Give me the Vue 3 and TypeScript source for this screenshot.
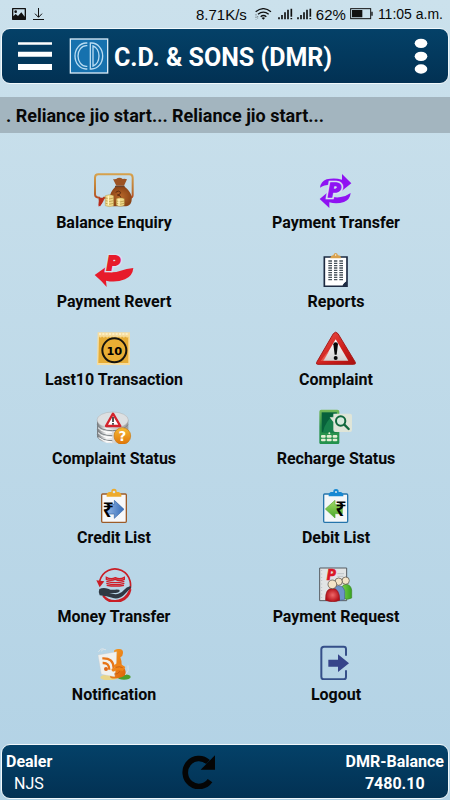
<script setup lang="ts">
import { ref } from 'vue'

interface MenuEntry {
  id: string
  label: string
  box: string
}

const entries = ref<MenuEntry[]>([
  { id: 'balance', label: 'Balance Enquiry', box: '192 33 120 111' },
  { id: 'transfer', label: 'Payment Transfer', box: '198 33 120 111' },
  { id: 'revert', label: 'Payment Revert', box: '192 269 120 111' },
  { id: 'reports', label: 'Reports', box: '198 269 120 111' },
  { id: 'last10', label: 'Last10 Transaction', box: '192 25 120 111' },
  { id: 'complaint', label: 'Complaint', box: '198 25 120 111' },
  { id: 'status', label: 'Complaint Status', box: '192 261 120 111' },
  { id: 'recharge', label: 'Recharge Status', box: '198 261 120 111' },
  { id: 'credit', label: 'Credit List', box: '192 18 120 111' },
  { id: 'debit', label: 'Debit List', box: '198 18 120 111' },
  { id: 'money', label: 'Money Transfer', box: '192 254 120 111' },
  { id: 'request', label: 'Payment Request', box: '198 254 120 111' },
  { id: 'notification', label: 'Notification', box: '192 25 120 111' },
  { id: 'logout', label: 'Logout', box: '198 25 120 111' },
])

const reportRows = [302, 309, 316, 323, 330, 337, 344, 351, 358]
</script>

<template>
  <div class="screen">
    <div class="status-bar">
      <svg class="picture" viewBox="36 24 42 36" aria-hidden="true">
        <path fill="#111" fill-rule="evenodd" d="M38 24h38q2 0 2 2v32q0 2-2 2H38q-2 0-2-2V26q0-2 2-2zm2 4v21l7-7 7 6 10-11 10 13V28z" />
        <circle cx="47" cy="35" r="4" fill="#111" />
      </svg>
      <svg class="download" viewBox="99 24 33 36" aria-hidden="true">
        <path fill="none" stroke="#111" stroke-width="3" d="M115.500 24v27M105 41l10.500 11L126 41M99 58.500h33" />
      </svg>
      <span class="speed">8.71K/s</span>
      <svg class="wifi" viewBox="90 24 51 36" aria-hidden="true">
        <g fill="none" stroke="#111" stroke-width="4">
          <path d="M92 35q23-18 46 0M99 43q16-13 32 0M107 50q8-7 17 0" />
        </g>
        <path fill="#111" d="M110 54q5-4 10 0l-5 5z" />
        <path stroke="#111" stroke-width="2" stroke-dasharray="2 3" d="M93 42v16M98 48v10" />
      </svg>
      <svg class="signal" viewBox="158 24 45 36" aria-hidden="true">
        <path stroke="#111" stroke-width="5" d="M161 52v6M170 45v13M179 37v21M188 29v29M198 26v24M198 54v4" />
      </svg>
      <svg class="signal" viewBox="158 24 45 36" aria-hidden="true">
        <path stroke="#111" stroke-width="5" d="M161 52v6M170 45v13M179 37v21M188 29v29M198 26v24M198 54v4" />
      </svg>
      <span class="speed">62%</span>
      <svg class="battery" viewBox="375 24 69 36" aria-hidden="true">
        <rect x="377" y="26" width="60" height="30" fill="none" stroke="#111" stroke-width="3" />
        <path fill="#111" d="M381 30h31v22h-31zM439 35h4v12h-4z" />
      </svg>
      <span class="clock">11:05 a.m.</span>
    </div>

    <header class="panel top">
      <button type="button" class="bare menu" aria-label="Menu">
        <svg viewBox="54 117 102 102">
          <path fill="#fff" d="M54 127h102v7H54zM54 155h102v15H54zM54 192h102v18H54z" />
        </svg>
      </button>
      <svg class="logo" viewBox="207 114 120 108" aria-hidden="true">
        <rect x="211" y="117" width="112" height="102" fill="#1671ae" stroke="#d9ebf6" stroke-width="4" />
        <g fill="none" stroke="#b9dcf2" stroke-width="4">
          <path d="M262 129h-4a33 39 0 0 0 0 78h4M262 137h-3a25 31 0 0 0 0 62h3" />
          <path d="M271 129h4a33 39 0 0 1 0 78h-4zM279 138a24 31 0 0 1 0 60z" />
        </g>
      </svg>
      <h1>C.D. &amp; SONS (DMR)</h1>
      <button type="button" class="bare more" aria-label="More options">
        <svg viewBox="568 114 42 108">
          <g fill="#fff">
            <ellipse cx="589" cy="130" rx="19" ry="14" />
            <ellipse cx="589" cy="169" rx="19" ry="14" />
            <ellipse cx="589" cy="207" rx="19" ry="14" />
          </g>
        </svg>
      </button>
    </header>

    <p class="ticker">. Reliance jio start... Reliance jio start...</p>

    <main class="grid">
      <button v-for="entry in entries" :key="entry.id" type="button" class="bare entry">
        <svg class="icon" :viewBox="entry.box" aria-hidden="true">
          <template v-if="entry.id === 'balance'">
            <defs>
              <linearGradient id="bubble" x2="0" y2="1"><stop stop-color="#d6a14c" /><stop offset=".55" stop-color="#b9702f" /><stop offset="1" stop-color="#b51f18" /></linearGradient>
              <radialGradient id="sack"><stop stop-color="#b8682a" /><stop offset="1" stop-color="#8b4417" /></radialGradient>
            </defs>
            <path fill="none" stroke="url(#bubble)" stroke-width="6" d="M205 43h93q10 0 10 10v52q0 8-8 8h-78q-5 12-14 24 3-14 0-24-13 0-13-10V53q0-10 10-10z" />
            <path fill="#b92a1c" d="M208 113h14q-5 16-16 28 4-14 2-28z" />
            <path fill="#9c5324" d="M249 57q8 2 14-3 9-2 15 3 7-2 13 1l-9 19h-23z" />
            <path fill="url(#sack)" d="M256 80h28c15 12 23 25 21 39-1 14-9 20-21 20h-30c-15 0-18-12-16-25 2-12 7-23 18-34z" />
            <path fill="none" stroke="#5c2b10" stroke-width="3" d="M255 79h29M257 97q8-8 15 0-1 8-10 8 10 0 11 9" />
            <g fill="#efd98b" stroke="#9c7c2d" stroke-width="1">
              <path d="M226 107q12-6 25 0v30q-12 6-25 0zM259 116q11-5 24 0v20q-11 6-24 0z" />
            </g>
            <path fill="none" stroke="#ac8b3a" stroke-width="2" d="M227 114q12 5 24 0M227 122q12 5 24 0M227 130q12 5 24 0M260 123q11 5 23 0M260 130q11 5 23 0" />
            <path stroke="#fff5c1" stroke-width="4" d="M235 107v29M267 117v20" />
          </template>

          <template v-else-if="entry.id === 'transfer'">
            <g fill="#8f12f2">
              <path d="M210 83q3-20 20-25 24-5 46 1V42l28 28-28 22V79q-20-8-34-5-21 0-32 9z" />
              <path d="M302 99q-2 20-20 27-22 7-44 1v17l-29-27 29-24v14q19 8 34 4 18-3 30-12z" />
            </g>
            <text x="235" y="110" class="letter halo">P</text>
            <text x="235" y="110" class="letter purple-letter">P</text>
          </template>

          <template v-else-if="entry.id === 'revert'">
            <path fill="#e71b2b" d="M194 344l35-25-4 14q24 7 47-2 17-6 38-8-2 24-25 34-28 11-57 4l2 19q-17-20-36-36z" />
            <text x="232" y="328" class="letter halo">P</text>
            <text x="232" y="328" class="letter red-letter">P</text>
          </template>

          <template v-else-if="entry.id === 'reports'">
            <path fill="#fff" stroke="#1d2b42" stroke-width="5" d="M223 290h68v88h-68z" />
            <path fill="#1d2b42" d="M276 379q4-14 15-16v16z" />
            <path fill="#fff" d="M276 375q2-11 12-14l-1 3q-7 4-9 11z" />
            <path fill="#d9a14c" d="M241 294q1-9 9-9 2-7 7-7t7 7q9 0 9 9z" />
            <circle cx="257" cy="284" r="2" fill="#fff" />
            <path
              v-for="y in reportRows"
              :key="y"
              stroke="#48535b"
              stroke-width="4"
              :d="`M235 ${y}h11M252 ${y}h10M268 ${y}h11`"
            />
          </template>

          <template v-else-if="entry.id === 'last10'">
            <path fill="#f6dda0" d="M203 38h97v98h-99l2-98z" />
            <path fill="#e5ac36" d="M207 51h88v79h-90z" />
            <path fill="none" stroke="#fff4ce" stroke-width="5" stroke-dasharray="6 4" d="M207 43h88" />
            <path fill="none" stroke="#f7dc95" stroke-width="5" stroke-dasharray="5 5" d="M209 51h86" />
            <circle cx="253" cy="92" r="36" fill="#e9ae34" stroke="#15130e" stroke-width="6" />
            <text x="253" y="105" class="ten" text-anchor="middle">10</text>
          </template>

          <template v-else-if="entry.id === 'complaint'">
            <defs>
              <linearGradient id="warn" x2="1" y2="1"><stop stop-color="#ef574e" /><stop offset=".6" stop-color="#cd1d1a" /><stop offset="1" stop-color="#a9100f" /></linearGradient>
              <linearGradient id="warnInner" x2="0" y2="1"><stop stop-color="#fff" /><stop offset="1" stop-color="#d2d2d2" /></linearGradient>
            </defs>
            <path fill="url(#warn)" stroke="#a51b1a" stroke-width="3" stroke-linejoin="round" d="M250 42q7-9 14 0l52 86q2 6-5 6H204q-7 0-4-6z" />
            <path fill="url(#warnInner)" d="M257 59l38 64h-76z" />
            <path fill="#ef6355" opacity=".75" d="M212 124q17-25 25-29l-16 28z" />
            <path fill="#080808" d="M250 74q0-6 7-6t7 6l-4 31h-6z" />
            <circle cx="257" cy="115" r="6" fill="#080808" />
          </template>

          <template v-else-if="entry.id === 'status'">
            <defs>
              <linearGradient id="disk"><stop stop-color="#73777b" /><stop offset=".3" stop-color="#f7f7f7" /><stop offset="1" stop-color="#999" /></linearGradient>
              <linearGradient id="help" x2="0" y2="1"><stop stop-color="#f6bb35" /><stop offset="1" stop-color="#e07408" /></linearGradient>
            </defs>
            <path fill="url(#disk)" d="M201 300h94v50q-12 20-47 20t-47-19z" />
            <path fill="none" stroke="#7d8387" stroke-width="3" d="M202 314q10 18 45 18t47-18M202 329q10 18 45 18M202 344q10 18 45 18" />
            <path fill="none" stroke="#fff" stroke-width="3" d="M204 323q14 15 42 15M204 338q14 15 42 15M206 353q14 12 40 13" />
            <ellipse cx="248" cy="300" rx="47" ry="24" fill="#dde0e2" stroke="#999" stroke-width="1" />
            <path fill="#fff" stroke="#d3232b" stroke-width="7" stroke-linejoin="round" d="M249 281l22 37h-43z" />
            <path stroke="#333" stroke-width="5" d="M249 291v15M249 309v5" />
            <circle cx="277" cy="348" r="25" fill="url(#help)" stroke="#c87911" stroke-width="2" />
            <text x="277" y="363" class="question" text-anchor="middle">?</text>
          </template>

          <template v-else-if="entry.id === 'recharge'">
            <defs>
              <linearGradient id="phone" x2="0" y2="1"><stop stop-color="#75b957" /><stop offset=".5" stop-color="#2c924d" /><stop offset="1" stop-color="#23924c" /></linearGradient>
            </defs>
            <rect x="208" y="269" width="60" height="104" rx="6" fill="url(#phone)" />
            <path fill="#07613b" d="M215 277h45v60h-45z" />
            <path fill="#17804b" d="M219 337q4-31 38-58l2-2h1v60z" />
            <g fill="#e4eed4">
              <rect x="213" y="345" width="14" height="8" rx="3" /><rect x="230" y="345" width="15" height="8" rx="3" /><rect x="248" y="345" width="14" height="8" rx="3" />
              <rect x="213" y="356" width="14" height="8" rx="3" /><rect x="230" y="356" width="15" height="8" rx="3" /><rect x="248" y="356" width="14" height="8" rx="3" />
              <circle cx="238" cy="340" r="3" />
            </g>
            <path fill="#dfe5d8" d="M250 281h50q6 0 6 6v43q0 6-6 6h-44q-6 0-6-6v-24l-11-14h11z" />
            <circle cx="272" cy="303" r="14" fill="#d7eadd" stroke="#10673c" stroke-width="6" />
            <path stroke="#10673c" stroke-width="7" stroke-linecap="round" d="M283 314l13 13" />
          </template>

          <template v-else-if="entry.id === 'credit'">
            <defs><linearGradient id="blueArrow" x2="1"><stop stop-color="#8fb4e3" /><stop offset="1" stop-color="#346bb8" /></linearGradient></defs>
            <rect x="215" y="42" width="74" height="85" rx="3" fill="#f7f8fa" stroke="#9c5b28" stroke-width="4" />
            <path fill="#edaa2c" d="M230 50q-2-12 8-14h6q-1-10 8-10t8 10h6q10 3 8 14z" />
            <circle cx="252" cy="36" r="4" fill="#d8e7ef" />
            <path fill="url(#blueArrow)" stroke="#3766a5" stroke-width="2" d="M232 73h21V61l29 27-29 27v-13h-21z" />
            <text x="235" y="110" class="rupee" text-anchor="middle">₹</text>
          </template>

          <template v-else-if="entry.id === 'debit'">
            <defs><linearGradient id="greenArrow" x2="0" y2="1"><stop stop-color="#a3da67" /><stop offset="1" stop-color="#49a928" /></linearGradient></defs>
            <rect x="221" y="42" width="72" height="85" rx="3" fill="#f5f7f8" stroke="#2574ab" stroke-width="4" />
            <path fill="#1788d2" d="M236 49q-1-11 7-13h7q-1-9 8-9t8 9h7q8 3 7 13z" />
            <circle cx="258" cy="36" r="3" fill="#d8e7ef" />
            <path fill="url(#greenArrow)" stroke="#5eaa3e" stroke-width="2" d="M226 87l29-26v13h22v27h-22v13z" />
            <text x="273" y="109" class="rupee" text-anchor="middle">₹</text>
          </template>

          <template v-else-if="entry.id === 'money'">
            <path fill="none" stroke="#c91e26" stroke-width="5" d="M209 302a47 48 0 1 1 10 43M219 347a47 48 0 0 0 83-20" />
            <path fill="#c91e26" d="M199 300l24 3-14 18z" />
            <g fill="none" stroke="#d11d27" stroke-width="4">
              <path d="M229 291q14 8 27 1 13 7 27-1v6q-14 7-27 0-14 6-27 0z" />
              <path d="M229 303q28 8 54 0M229 309q28 8 54 0M230 315q27 5 52 0" />
            </g>
            <path fill="#303943" d="M208 326q12-6 26-1 10 5 21 3 15-1 14 4-1 5-13 6h-18l18 4q15-1 25-12 9-10 19-12 7 1 0 7l-19 20q-11 11-29 9-24-7-43-9-5-10-1-19z" />
          </template>

          <template v-else-if="entry.id === 'request'">
            <defs>
              <radialGradient id="redBody"><stop stop-color="#ef6868" /><stop offset="1" stop-color="#b41019" /></radialGradient>
              <linearGradient id="greenBody" x2="1"><stop stop-color="#79d047" /><stop offset="1" stop-color="#36a31f" /></linearGradient>
            </defs>
            <path fill="#e1e4e5" stroke="#555b60" stroke-width="3" d="M209 263h81v98h-81z" />
            <path stroke="#8b969e" stroke-width="2" stroke-dasharray="2 8" d="M215 270v88" />
            <path stroke="#bdc4c8" stroke-width="3" d="M262 280h20M262 288h18" />
            <text x="231" y="298" class="small-letter">P</text>
            <path fill="url(#greenBody)" stroke="#42872e" stroke-width="2" d="M276 322q2-10 12-10 14 1 17 17v24q-12 6-23 2z" />
            <circle cx="287" cy="301" r="11" fill="#f4e4c7" stroke="#4b443b" stroke-width="2" />
            <path fill="#6e93c8" stroke="#426698" stroke-width="2" d="M251 330q3-14 15-14 15 1 18 17v24q-15 6-26 1z" />
            <circle cx="266" cy="304" r="11" fill="#f4e4c7" stroke="#4b443b" stroke-width="2" />
            <path fill="url(#redBody)" stroke="#92151b" stroke-width="2" d="M227 360q-2-36 20-36t22 36q-20 9-42 0z" />
            <circle cx="247" cy="312" r="13" fill="#f4e4c7" stroke="#4b443b" stroke-width="2" />
          </template>

          <template v-else-if="entry.id === 'notification'">
            <defs><linearGradient id="feed" x2="1" y2="1"><stop stop-color="#f6a327" /><stop offset="1" stop-color="#df6109" /></linearGradient></defs>
            <ellipse cx="237" cy="128" rx="26" ry="9" fill="#e9d68a" />
            <ellipse cx="282" cy="127" rx="20" ry="8" fill="#4c9e2b" />
            <path fill="none" stroke="#d9e3e8" stroke-width="3" d="M205 52q6-12 16-10M213 50q6-9 15-5M294 92q5 16-8 29" />
            <path fill="url(#feed)" d="M252 49q1-5 12-6 16-2 15 12 0 9-8 13 5 12 4 24 10 6 12 20 0 13-13 16-18 6-32 2l-6-14 18-22z" />
            <path fill="#f1f1ee" stroke="#c5c9c8" stroke-width="1" d="M204 61l56-10-1 33-5 42-40-7z" />
            <path fill="none" stroke="#e87517" stroke-width="7" d="M217 71q33-2 34 29M218 85q20-1 20 20" />
            <circle cx="228" cy="103" r="6" fill="#dd6719" />
            <path fill="#ee8419" d="M253 91q10-9 20-2l13 8-8 12-13-4-16 6q-8-5-2-10l9-2q-8-3-3-8z" />
            <path fill="none" stroke="#b84e0d" stroke-width="2" d="M257 98q13-4 21 1M252 118q10 3 18-8" />
          </template>

          <template v-else>
            <path fill="none" stroke="#354f89" stroke-width="6" d="M288 63V43q0-7-7-7h-59q-8 0-8 8v82q0 8 8 8h59q7 0 7-7v-20" />
            <path fill="#36448a" d="M235 75h29V59l33 27-33 26V96h-29z" />
          </template>
        </svg>
        <span>{{ entry.label }}</span>
      </button>
    </main>

    <footer class="panel bottom">
      <div class="account">
        <strong>Dealer</strong>
        <span class="name">NJS</span>
      </div>
      <button type="button" class="bare refresh" aria-label="Refresh">
        <svg viewBox="546 61 102 102">
          <path fill="none" stroke="#050505" stroke-width="17" d="M624 82A41 42 0 1 0 630 138" />
          <path fill="#050505" d="M645 62v43h-43z" />
        </svg>
      </button>
      <div class="account balance">
        <strong>DMR-Balance</strong>
        <strong>7480.10</strong>
      </div>
    </footer>
  </div>
</template>

<style>
body {
  margin: 0;
}
</style>

<style scoped>
.screen {
  display: flex;
  flex-direction: column;
  box-sizing: border-box;
  min-height: 100vh;
  padding-bottom: 1px;
  background: linear-gradient(#cbe1ec, #b2d2e5);
  color: #080808;
  font-family: Roboto, "Liberation Sans", sans-serif;
}

svg {
  display: block;
  flex: none;
}

.bare {
  padding: 0;
  border: 0;
  background: none;
  color: inherit;
  font: inherit;
  cursor: pointer;
}

.status-bar {
  display: flex;
  align-items: center;
  height: 28px;
  padding: 0 7px 0 12px;
  font-family: "Liberation Sans", sans-serif;
  font-size: 15px;
  white-space: nowrap;
}

.picture {
  width: 14px;
  height: 12px;
}

.download {
  width: 11px;
  height: 12px;
  margin: 0 auto 0 7px;
}

.wifi {
  width: 17px;
  height: 12px;
  margin: 0 6px 0 8px;
}

.signal {
  width: 15px;
  height: 12px;
  margin-right: 4px;
}

.battery {
  width: 23px;
  height: 12px;
  margin: 0 5px 0 4px;
}

.clock {
  font-size: 14px;
}

.panel {
  display: flex;
  align-items: center;
  box-sizing: border-box;
  margin: 0 1px;
  border: 1px solid #f1f8fb;
  border-radius: 9px;
  background: linear-gradient(#044168, #023153);
  color: #fff;
}

.top {
  height: 56px;
  padding: 0 20px 0 16px;
}

.menu,
.menu svg,
.refresh svg {
  width: 34px;
  height: 34px;
}

.logo {
  width: 40px;
  height: 36px;
  margin: 0 5px 0 17px;
}

h1 {
  flex: 1;
  margin: 0;
  padding-top: 4px;
  font-size: 25px;
  font-weight: 700;
  line-height: 32px;
  white-space: nowrap;
}

.more svg {
  width: 14px;
  height: 36px;
}

.ticker {
  margin: 13px 0 0;
  padding: 2px 6px 0;
  background: #a3b5bf;
  font-size: 18px;
  font-weight: 700;
  line-height: 34px;
  white-space: nowrap;
  overflow: hidden;
}

.grid {
  display: grid;
  flex: 1;
  grid-template-columns: 1fr 1fr;
  grid-auto-rows: 1fr;
  margin: 38px 3px 22px;
}

.entry {
  display: flex;
  flex-direction: column;
  align-items: center;
  gap: 5px;
  font-size: 16px;
  font-weight: 700;
  line-height: 20px;
}

.icon {
  width: 40px;
  height: 37px;
}

.ten,
.question {
  font-family: "DejaVu Sans", sans-serif;
  font-weight: 700;
}

.ten {
  font-size: 34px;
}

.question {
  fill: #fff;
  font-size: 40px;
}

.rupee {
  font-family: "Noto Sans", "DejaVu Sans", sans-serif;
  font-size: 60px;
  font-weight: 600;
}

.letter,
.small-letter {
  font-family: Roboto, sans-serif;
  font-weight: 900;
  font-style: italic;
}

.letter {
  font-size: 60px;
}

.halo {
  fill: #d8e2f0;
  stroke: #d8e2f0;
  stroke-width: 14px;
}

.purple-letter {
  fill: #8f12f2;
  stroke: #8f12f2;
  stroke-width: 4px;
}

.red-letter {
  fill: #e71b2b;
  stroke: #e71b2b;
  stroke-width: 6px;
}

.small-letter {
  fill: #db1726;
  stroke: #db1726;
  stroke-width: 2px;
  font-size: 42px;
}

.bottom {
  justify-content: space-between;
  height: 55px;
  padding: 0 4px;
}

.account {
  display: flex;
  flex-direction: column;
  padding-top: 2px;
  font-size: 16px;
  line-height: 22px;
}

.name {
  padding-left: 8px;
}

.balance {
  align-items: center;
}
</style>
